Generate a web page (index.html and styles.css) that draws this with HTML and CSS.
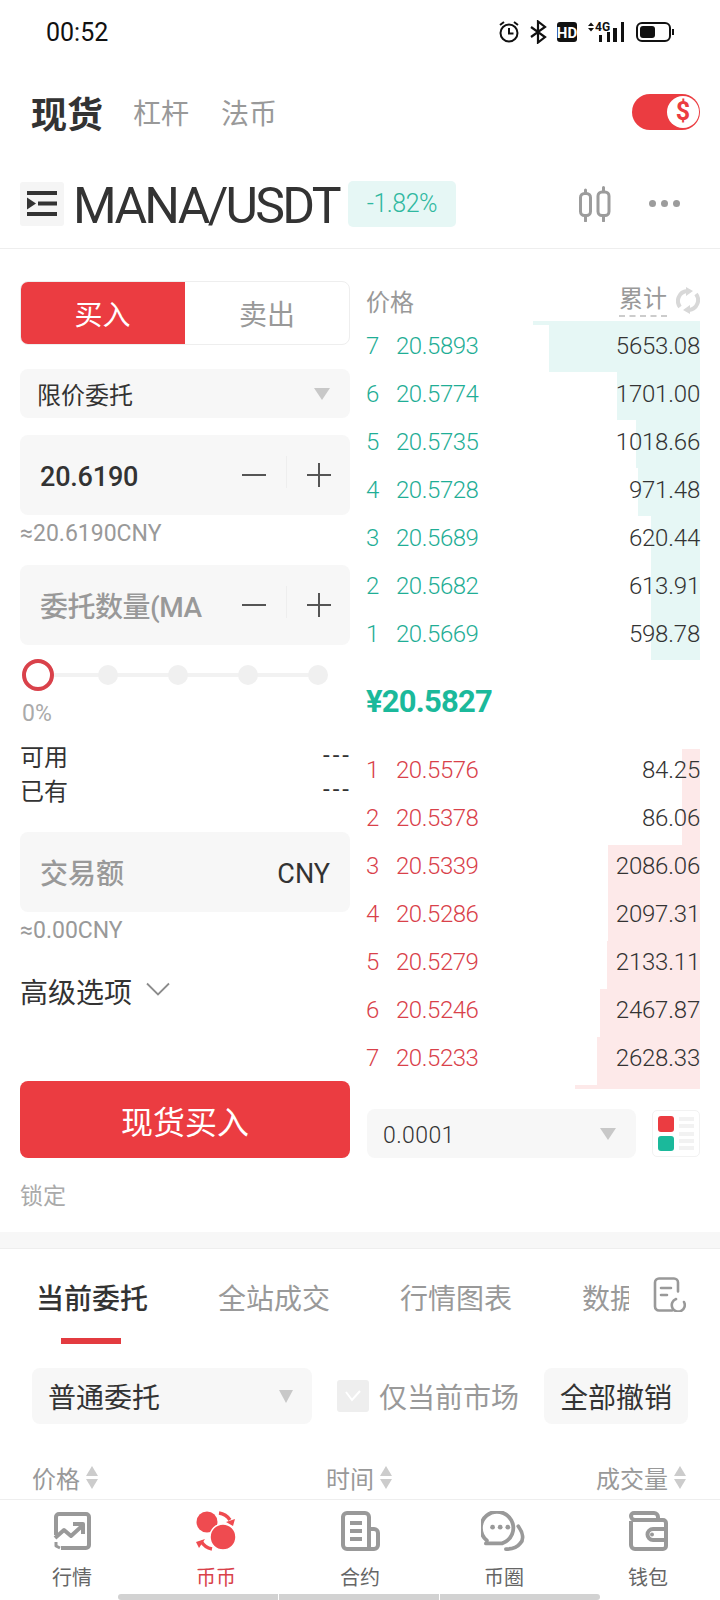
FILE: index.html
```html
<!DOCTYPE html>
<html lang="zh-CN">

<head>
    <meta charset="UTF-8">
    <meta name="viewport" content="width=device-width, initial-scale=1.0">
    <title>现货交易</title>
    <link rel="stylesheet" href="styles.css">
</head>

<body>
    <div class="status-bar">
        <span class="status-time">00:52</span>
        <svg class="status-icons" width="180" height="24" viewBox="0 0 180 24">
            <!-- alarm -->
            <g fill="none" stroke="#111" stroke-width="2">
                <circle cx="11" cy="13" r="8.500" />
                <path d="M11 8v5.500h4.500" />
                <path d="M2 5l4-3M20 5l-4-3" />
            </g>
            <!-- bluetooth -->
            <path d="M33 7l14 10-7 5.500V1.500L47 7 33 17" fill="none" stroke="#111" stroke-width="2.200" />
            <!-- hd -->
            <rect x="59" y="2" width="20" height="20" rx="3" fill="#111" />
            <text x="69" y="17.500" class="status-hd" text-anchor="middle">HD</text>
            <!-- signal -->
            <path d="M90 6l3-3.500L96 6zM90 8l3 3.500L96 8z" fill="#111" />
            <text x="97" y="11" class="status-4g">4G</text>
            <rect x="101" y="15" width="3" height="7" fill="#111" />
            <rect x="109" y="12" width="3" height="10" fill="#111" />
            <rect x="115" y="8" width="4" height="14" fill="#111" />
            <rect x="123" y="2" width="3" height="20" fill="#111" />
            <!-- battery -->
            <rect x="139" y="3" width="33" height="18" rx="5" fill="none" stroke="#111" stroke-width="2" />
            <rect x="142" y="6" width="15" height="12" rx="3" fill="#111" />
            <rect x="174" y="9" width="2" height="6" fill="#111" />
        </svg>
    </div>

    <div class="market-tabs">
        <span class="market-tab active">现货</span>
        <span class="market-tab">杠杆</span>
        <span class="market-tab">法币</span>
        <div class="toggle"><span class="toggle-knob">$</span></div>
    </div>

    <div class="pair-row">
        <div class="pair-menu">
            <svg width="30" height="27" viewBox="0 0 30 27">
                <path d="M0 1h30v4H0zM11 11.500h19v4H11zM0 22h30v4H0z" fill="#333" />
                <path d="M0 7.500l9 6-9 6z" fill="#333" />
            </svg>
        </div>
        <span class="pair-name">MANA/USDT</span>
        <span class="pair-change">-1.82%</span>
        <svg class="pair-candle" width="33" height="36" viewBox="0 0 33 36" fill="none" stroke="#9c9c9c" stroke-width="3" stroke-linecap="round">
            <rect x="1.500" y="7.500" width="10" height="22" rx="4" />
            <path d="M6.500 4v3M6.500 30v5" />
            <rect x="19" y="6" width="11" height="23.500" rx="4" />
            <path d="M24.500 1.500v4M24.500 30v5" />
        </svg>
        <div class="pair-more"><i></i><i></i><i></i></div>
    </div>

    <div class="trade">
        <div class="order-form">
            <div class="side-switch">
                <span class="side side-buy">买入</span>
                <span class="side side-sell">卖出</span>
            </div>

            <div class="select order-type">
                <span>限价委托</span>
                <i class="caret"></i>
            </div>

            <div class="field field-price">
                <span class="field-value">20.6190</span>
                <div class="stepper">
                    <span class="minus"></span>
                    <span class="step-line"></span>
                    <span class="plus"></span>
                </div>
            </div>
            <div class="hint">≈20.6190CNY</div>

            <div class="field field-qty">
                <span class="field-holder">委托数量(MA</span>
                <div class="stepper">
                    <span class="minus"></span>
                    <span class="step-line"></span>
                    <span class="plus"></span>
                </div>
            </div>

            <div class="slider">
                <span class="slider-line"></span>
                <span class="slider-knob"></span>
                <span class="slider-dot"></span>
                <span class="slider-dot"></span>
                <span class="slider-dot"></span>
                <span class="slider-dot"></span>
            </div>
            <div class="percent">0%</div>

            <div class="balance first"><span>可用</span><span class="dashes">---</span></div>
            <div class="balance"><span>已有</span><span class="dashes">---</span></div>

            <div class="field field-amount">
                <span class="field-holder">交易额</span>
                <span class="field-unit">CNY</span>
            </div>
            <div class="hint">≈0.00CNY</div>

            <div class="advanced">
                <span>高级选项</span>
                <svg width="24" height="14" viewBox="0 0 24 14" fill="none" stroke="#8c8c8c" stroke-width="1.800"><path d="M1 1.500l11 11 11-11" /></svg>
            </div>

            <div class="submit">现货买入</div>
            <div class="lock">锁定</div>
        </div>

        <div class="book">
            <div class="book-head">
                <span class="head-price">价格</span>
                <div class="book-total">
                    <span class="total-label">累计</span>
                    <svg width="24" height="27" viewBox="0 0 24 27" fill="none" stroke="#d8d8d8" stroke-width="4">
                        <path d="M4 20A10 10 0 0 1 11 4" />
                        <path d="M20 7A10 10 0 0 1 13 23" />
                        <path d="M10 0l7 4-7 5zM14 27l-7-4 7-5z" fill="#d8d8d8" stroke="none" />
                    </svg>
                </div>
            </div>

            <div class="book-row ask"><i class="bar-top" style="width:167px"></i><i class="bar" style="width:151px"></i><b>7</b><span class="price">20.5893</span><span class="total">5653.08</span></div>
            <div class="book-row ask"><i class="bar" style="width:83px"></i><b>6</b><span class="price">20.5774</span><span class="total">1701.00</span></div>
            <div class="book-row ask"><i class="bar" style="width:64px"></i><b>5</b><span class="price">20.5735</span><span class="total">1018.66</span></div>
            <div class="book-row ask"><i class="bar" style="width:62px"></i><b>4</b><span class="price">20.5728</span><span class="total">971.48</span></div>
            <div class="book-row ask"><i class="bar" style="width:49px"></i><b>3</b><span class="price">20.5689</span><span class="total">620.44</span></div>
            <div class="book-row ask"><i class="bar" style="width:49px"></i><b>2</b><span class="price">20.5682</span><span class="total">613.91</span></div>
            <div class="book-row ask"><i class="bar" style="width:49px"></i><b>1</b><span class="price">20.5669</span><span class="total">598.78</span></div>

            <div class="book-mid">¥20.5827</div>

            <div class="book-row bid"><i class="bar" style="width:18px"></i><b>1</b><span class="price">20.5576</span><span class="total">84.25</span></div>
            <div class="book-row bid"><i class="bar" style="width:18px"></i><b>2</b><span class="price">20.5378</span><span class="total">86.06</span></div>
            <div class="book-row bid"><i class="bar" style="width:92px"></i><b>3</b><span class="price">20.5339</span><span class="total">2086.06</span></div>
            <div class="book-row bid"><i class="bar" style="width:92px"></i><b>4</b><span class="price">20.5286</span><span class="total">2097.31</span></div>
            <div class="book-row bid"><i class="bar" style="width:93px"></i><b>5</b><span class="price">20.5279</span><span class="total">2133.11</span></div>
            <div class="book-row bid"><i class="bar" style="width:100px"></i><b>6</b><span class="price">20.5246</span><span class="total">2467.87</span></div>
            <div class="book-row bid"><i class="bar" style="width:103px"></i><i class="bar-bottom" style="width:125px"></i><b>7</b><span class="price">20.5233</span><span class="total">2628.33</span></div>

            <div class="book-foot">
                <div class="select depth">
                    <span>0.0001</span>
                    <i class="caret"></i>
                </div>
                <div class="layout-btn">
                    <div class="layout-colors"><i class="red"></i><i class="green"></i></div>
                    <div class="layout-lines"><i></i><i></i><i></i><i></i><i></i></div>
                </div>
            </div>
        </div>
    </div>

    <div class="band"></div>

    <div class="orders-tabs">
        <div class="orders-tabs-list">
            <span class="orders-tab active">当前委托</span>
            <span class="orders-tab">全站成交</span>
            <span class="orders-tab">行情图表</span>
            <span class="orders-tab">数据</span>
        </div>
        <svg class="orders-icon" width="33" height="35" viewBox="0 0 33 35" fill="none" stroke="#999" stroke-width="2.600" stroke-linecap="round">
            <path d="M19 33.500H6a4 4 0 0 1-4-4V5.500a4 4 0 0 1 4-4h15a4 4 0 0 1 4 4v9" />
            <path d="M8 11h10M8 18h6" />
            <path d="M23 22a6.500 6.500 0 1 0 8 3" />
        </svg>
    </div>
    <div class="orders-underline"></div>

    <div class="filters">
        <div class="select orders-type">
            <span>普通委托</span>
            <i class="caret"></i>
        </div>
        <div class="check">
            <svg width="20" height="14" viewBox="0 0 20 14" fill="none" stroke="#fff" stroke-width="2"><path d="M3 3l6 8 8-9" /></svg>
        </div>
        <span class="check-label">仅当前市场</span>
        <span class="cancel-all">全部撤销</span>
    </div>

    <div class="orders-head">
        <div class="col"><span>价格</span><span class="sort"><i class="up"></i><i class="down"></i></span></div>
        <div class="col"><span>时间</span><span class="sort"><i class="up"></i><i class="down"></i></span></div>
        <div class="col"><span>成交量</span><span class="sort"><i class="up"></i><i class="down"></i></span></div>
    </div>

    <nav class="nav">
        <div class="nav-items">
            <div class="nav-item">
                <svg width="40" height="40" viewBox="0 0 40 40" fill="none" stroke="#999" stroke-width="4" stroke-linejoin="round">
                    <path d="M4 24V6a3 3 0 0 1 3-3h27a3 3 0 0 1 3 3v28a3 3 0 0 1-3 3H9" />
                    <path d="M3 27l9-8 7 6 11-10" />
                    <path d="M21 13h10v10" />
                    <path d="M4 31v4l4 2" stroke-width="3" />
                </svg>
                <span>行情</span>
            </div>
            <div class="nav-item active">
                <svg width="40" height="40" viewBox="0 0 40 40">
                    <circle cx="11" cy="11" r="10.500" fill="#ef4b50" />
                    <circle cx="27" cy="26" r="13" fill="#ef4b50" stroke="#fff" stroke-width="1.500" />
                    <path d="M23 2a16 16 0 0 1 11 7" fill="none" stroke="#ef4b50" stroke-width="3.500" />
                    <path d="M30 11l9-3-2 7z" fill="#ef4b50" />
                    <path d="M16 38A16 16 0 0 1 5 30" fill="none" stroke="#ef4b50" stroke-width="3.500" />
                    <path d="M9 28l-9 3 3 6z" fill="#ef4b50" />
                </svg>
                <span>币币</span>
            </div>
            <div class="nav-item">
                <svg width="40" height="40" viewBox="0 0 40 40" fill="none" stroke="#999" stroke-width="4" stroke-linejoin="round">
                    <path d="M29 38H7a4 4 0 0 1-4-4V6a4 4 0 0 1 4-4h18a4 4 0 0 1 4 4z" />
                    <path d="M29 18h5a4 4 0 0 1 4 4v12a4 4 0 0 1-4 4h-5" />
                    <path d="M10 12h12M10 20h12M10 28h12" />
                </svg>
                <span>合约</span>
            </div>
            <div class="nav-item">
                <svg width="46" height="42" viewBox="0 0 46 42" fill="none" stroke="#999" stroke-width="4" stroke-linecap="round">
                    <path d="M5 31A17 17 0 1 1 21 34H4" />
                    <path d="M38 16c5 7 6 14 2 18-3 4-8 6-15 6" />
                    <circle cx="11" cy="17" r="2.500" fill="#999" stroke="none" />
                    <circle cx="19" cy="17" r="2.500" fill="#999" stroke="none" />
                    <circle cx="27" cy="17" r="2.500" fill="#999" stroke="none" />
                </svg>
                <span>币圈</span>
            </div>
            <div class="nav-item">
                <svg width="40" height="40" viewBox="0 0 40 40" fill="none" stroke="#999" stroke-width="4" stroke-linejoin="round">
                    <path d="M3 10v24a4 4 0 0 0 4 4h28a3 3 0 0 0 3-3V12a3 3 0 0 0-3-3H7a4 4 0 0 1-4-4 3 3 0 0 1 3-3h20a4 4 0 0 1 4 4v3" />
                    <path d="M38 18H25a5 5 0 0 0 0 11h13" />
                    <circle cx="24" cy="23.500" r="2" fill="#999" stroke="none" />
                </svg>
                <span>钱包</span>
            </div>
        </div>
        <div class="home-bar"><i></i><i></i><i></i></div>
    </nav>
</body>

</html>
```

FILE: styles.css
```css
* {
    box-sizing: border-box;
}

html,
body {
    margin: 0;
    padding: 0;
}

body {
    width: 720px;
    height: 1600px;
    overflow: hidden;
    background-color: #ffffff;
    color: #333333;
    font-family: Roboto, "Noto Sans CJK SC", sans-serif;
}

i {
    display: block;
}

/* status bar */
.status-bar {
    height: 64px;
    display: flex;
    align-items: center;
    justify-content: space-between;
    padding: 0 42px 0 46px;
}

.status-time {
    font-size: 25px;
    color: #111111;
}

.status-hd {
    font-size: 15px;
    font-weight: 700;
    fill: #ffffff;
    font-family: Roboto, sans-serif;
}

.status-4g {
    font-size: 12px;
    font-weight: 700;
    fill: #111111;
    font-family: Roboto, sans-serif;
}

/* spot / margin tabs */
.market-tabs {
    height: 96px;
    display: flex;
    align-items: center;
    padding: 0 20px 0 31px;
}

.market-tab {
    font-size: 28px;
    color: #999999;
    margin-right: 32px;
}

.market-tab.active {
    font-size: 36px;
    font-weight: 700;
    color: #333333;
    margin-right: 30px;
}

.toggle {
    margin-left: auto;
    width: 68px;
    height: 36px;
    border-radius: 18px;
    background-color: #eb3c41;
    display: flex;
    justify-content: flex-end;
    align-items: center;
    padding-right: 1px;
}

.toggle-knob {
    width: 32px;
    height: 32px;
    border-radius: 50%;
    background-color: #ffffff;
    color: #eb3c41;
    font-size: 25px;
    font-weight: 700;
    line-height: 32px;
    text-align: center;
}

/* pair row */
.pair-row {
    height: 89px;
    display: flex;
    align-items: center;
    padding: 0 20px 1px 20px;
    border-bottom: 1px solid #eeeeee;
}

.pair-menu {
    width: 44px;
    height: 44px;
    border-radius: 3px;
    background-color: #f5f5f5;
    display: flex;
    align-items: center;
    justify-content: center;
}

.pair-name {
    margin: 5px 0 0 9px;
    font-size: 50px;
    line-height: 44px;
    letter-spacing: -2.7px;
    color: #333333;
}

.pair-change {
    margin-left: 9px;
    width: 108px;
    height: 46px;
    border-radius: 5px;
    background-color: #e6f7f5;
    color: #2fb8a0;
    font-size: 25px;
    letter-spacing: -0.5px;
    font-weight: 300;
    line-height: 46px;
    text-align: center;
}

.pair-candle {
    margin-left: auto;
}

.pair-more {
    display: flex;
    gap: 5px;
    margin: 0 20px 0 37px;
}

.pair-more i {
    width: 7px;
    height: 7px;
    border-radius: 50%;
    background-color: #9c9c9c;
}

/* trade area */
.trade {
    height: 983px;
    display: flex;
    padding: 32px 20px 0 20px;
    gap: 17px;
}

.order-form {
    width: 330px;
}

.side-switch {
    height: 64px;
    display: flex;
    border: 1px solid #eeeeee;
    border-radius: 8px;
    overflow: hidden;
    font-size: 28px;
}

.side {
    display: flex;
    align-items: center;
    justify-content: center;
}

.side-buy {
    width: 165px;
    margin: -1px 0 -1px -1px;
    background-color: #eb3c41;
    color: #ffffff;
}

.side-sell {
    flex: 1;
    color: #999999;
}

.select {
    display: flex;
    align-items: center;
    justify-content: space-between;
    background-color: #f7f7f7;
    border-radius: 8px;
}

.caret {
    width: 0;
    height: 0;
    border-left: 8px solid transparent;
    border-right: 8px solid transparent;
    border-top: 12px solid #c8c8c8;
}

.order-type {
    height: 49px;
    margin-top: 24px;
    padding: 0 20px 0 17px;
    font-size: 24px;
}

.field {
    height: 80px;
    display: flex;
    align-items: center;
    justify-content: space-between;
    background-color: #f7f7f7;
    border-radius: 8px;
    padding: 0 20px;
}

.field-price {
    margin-top: 17px;
}

.field-qty {
    margin-top: 14px;
}

.field-amount {
    margin-top: 26px;
}

.field-value {
    font-size: 27px;
    font-weight: 500;
    letter-spacing: -0.2px;
    color: #333333;
    padding-top: 4px;
}

.field-holder {
    font-size: 28px;
    font-weight: 500;
    color: #999999;
    white-space: nowrap;
}

.field-qty .field-holder {
    letter-spacing: -0.5px;
}

.field-unit {
    font-size: 27px;
    color: #333333;
    padding-top: 4px;
}

.stepper {
    display: flex;
    align-items: center;
    margin-right: -1px;
}

.minus,
.plus {
    position: relative;
    display: block;
    width: 24px;
    height: 24px;
}

.minus::before,
.plus::before,
.plus::after {
    content: "";
    position: absolute;
    background-color: #555555;
}

.minus::before,
.plus::before {
    left: 0;
    right: 0;
    top: 11px;
    height: 2px;
}

.plus::after {
    top: 0;
    bottom: 0;
    left: 11px;
    width: 2px;
}

.step-line {
    width: 1px;
    height: 32px;
    background-color: #eeeeee;
    margin: -6px 20px 0 20px;
}

.hint {
    height: 36px;
    line-height: 36px;
    padding-top: 1px;
    font-size: 23px;
    color: #999999;
}

.slider {
    position: relative;
    display: flex;
    align-items: center;
    gap: 50px;
    width: 306px;
    height: 32px;
    margin: 14px 0 0 2px;
}

.slider-line {
    position: absolute;
    left: 10px;
    right: 10px;
    top: 14px;
    height: 4px;
    background-color: #f2f2f2;
}

.slider-knob {
    position: relative;
    width: 32px;
    height: 32px;
    border: 4px solid #d9414a;
    border-radius: 50%;
    background-color: #ffffff;
    margin-right: -6px;
}

.slider-dot {
    position: relative;
    width: 20px;
    height: 20px;
    border-radius: 50%;
    background-color: #f0f0f0;
}

.percent {
    height: 36px;
    line-height: 36px;
    margin: 5px 0 0 2px;
    font-size: 23px;
    color: #aaaaaa;
}

.balance {
    height: 34px;
    display: flex;
    align-items: center;
    justify-content: space-between;
    font-size: 24px;
}

.balance.first {
    margin-top: 6px;
}

.dashes {
    font-size: 24px;
    letter-spacing: 3px;
    margin-right: -2px;
}

.advanced {
    height: 36px;
    margin-top: 25px;
    display: flex;
    align-items: center;
    gap: 14px;
    font-size: 28px;
}

.advanced svg {
    margin-top: -4px;
}

.submit {
    height: 77px;
    margin-top: 72px;
    border-radius: 8px;
    background-color: #eb3c41;
    color: #ffffff;
    font-size: 32px;
    display: flex;
    align-items: center;
    justify-content: center;
}

.lock {
    height: 36px;
    line-height: 36px;
    margin-top: 21px;
    font-size: 23px;
    color: #aaaaaa;
}

/* order book */
.book {
    width: 333px;
}

.book-head {
    height: 41px;
    display: flex;
    justify-content: space-between;
    font-size: 24px;
    color: #999999;
}

.head-price {
    margin: 2px 0 0 -1px;
}

.book-total {
    display: flex;
    align-items: flex-start;
    gap: 9px;
    margin-top: 5px;
}

.total-label {
    height: 32px;
    line-height: 28px;
    margin-top: -1px;
    border-bottom: 2px dashed #cccccc;
}

.book-total svg {
    margin-top: 1px;
}

.book-row {
    position: relative;
    height: 48px;
    display: flex;
    align-items: center;
    font-size: 24px;
    font-weight: 300;
    letter-spacing: -0.2px;
}

.book-row b {
    position: relative;
    width: 30px;
    margin-left: -1px;
    font-weight: 300;
}

.price {
    position: relative;
    letter-spacing: -0.45px;
}

.total {
    position: relative;
    margin-left: auto;
    color: #333333;
}

.bar,
.bar-top,
.bar-bottom {
    position: absolute;
    right: 0;
}

.ask {
    color: #1fae96;
}

.ask .bar {
    top: 2px;
    height: 48px;
    background-color: #e6f7f5;
}

.bar-top {
    top: -1px;
    height: 4px;
    background-color: #e6f7f5;
}

.bid {
    color: #d9414a;
}

.bid .bar {
    top: 3px;
    height: 48px;
    background-color: #fde9e9;
}

.bar-bottom {
    top: 51px;
    height: 4px;
    background-color: #fde9e9;
}

.book-mid {
    height: 88px;
    padding-bottom: 2px;
    margin-left: -1px;
    display: flex;
    align-items: center;
    font-size: 31px;
    font-weight: 700;
    letter-spacing: -0.8px;
    color: #1bb99b;
}

.book-foot {
    display: flex;
    justify-content: space-between;
    margin-top: 27px;
}

.depth {
    width: 269px;
    height: 49px;
    padding: 0 20px 0 16px;
    font-size: 23px;
    letter-spacing: 0.4px;
    font-weight: 300;
}

.depth span {
    padding-top: 4px;
}

.layout-btn {
    width: 48px;
    height: 47px;
    margin-top: 1px;
    display: flex;
    gap: 5px;
    padding: 5px;
    border: 1px solid #f2f2f2;
    border-radius: 5px;
}

.layout-colors {
    display: flex;
    flex-direction: column;
    gap: 4px;
}

.layout-colors i {
    width: 16px;
    height: 16px;
    border-radius: 3px;
}

.layout-colors .red {
    background-color: #eb3c41;
}

.layout-colors .green {
    background-color: #1bb99b;
}

.layout-lines {
    flex: 1;
    display: flex;
    flex-direction: column;
    justify-content: space-between;
    padding: 1px 0;
}

.layout-lines i {
    height: 4px;
    background-color: #f2f2f2;
}

/* current orders */
.band {
    height: 17px;
    background-color: #f7f7f7;
    border-bottom: 1px solid #eeeeee;
}

.orders-tabs {
    height: 89px;
    display: flex;
    align-items: center;
    padding: 6px 0 0 36px;
}

.orders-tabs-list {
    width: 593px;
    overflow: hidden;
    display: flex;
    gap: 70px;
    white-space: nowrap;
    font-size: 28px;
    color: #999999;
}

.orders-tab.active {
    font-weight: 500;
    color: #333333;
}

.orders-icon {
    margin: -4px 0 0 24px;
}

.orders-underline {
    width: 60px;
    height: 6px;
    margin-left: 61px;
    background-color: #e33b40;
}

.filters {
    height: 56px;
    margin-top: 24px;
    display: flex;
    align-items: center;
    padding: 0 32px;
    font-size: 28px;
}

.orders-type {
    width: 280px;
    height: 56px;
    padding: 0 19px 0 16px;
}

.orders-type .caret {
    border-left-width: 7px;
    border-right-width: 7px;
    border-top-width: 13px;
}

.check {
    width: 32px;
    height: 32px;
    margin-left: 25px;
    border-radius: 3px;
    background-color: #eeeeee;
    display: flex;
    align-items: center;
    justify-content: center;
}

.check-label {
    margin-left: 10px;
    color: #999999;
}

.cancel-all {
    width: 144px;
    height: 56px;
    margin-left: auto;
    border-radius: 8px;
    background-color: #f7f7f7;
    display: flex;
    align-items: center;
    justify-content: center;
}

.orders-head {
    height: 37px;
    margin-top: 36px;
    padding: 0 34px 2px 32px;
    display: grid;
    grid-template-columns: 294px 1fr auto;
    font-size: 24px;
    color: #999999;
}

.col {
    display: flex;
    align-items: center;
    gap: 6px;
}

.sort {
    display: flex;
    flex-direction: column;
    gap: 3px;
}

.sort .up {
    width: 0;
    height: 0;
    border-left: 6px solid transparent;
    border-right: 6px solid transparent;
    border-bottom: 10px solid #cccccc;
}

.sort .down {
    width: 0;
    height: 0;
    border-left: 6px solid transparent;
    border-right: 6px solid transparent;
    border-top: 10px solid #cccccc;
}

/* bottom nav */
.nav {
    height: 101px;
    margin-top: 2px;
    border-top: 1px solid #eeeeee;
}

.nav-items {
    height: 94px;
    display: flex;
    padding-top: 11px;
}

.nav-item {
    width: 144px;
    display: flex;
    flex-direction: column;
    align-items: center;
    font-size: 20px;
    color: #666666;
}

.nav-item svg {
    height: 40px;
}

.nav-item span {
    margin-top: 12px;
    line-height: 30px;
}

.nav-item.active {
    color: #d9414a;
}

.home-bar {
    width: 482px;
    height: 6px;
    margin-left: 118px;
    display: flex;
    gap: 1px;
}

.home-bar i {
    flex: 1;
    background-color: #d2d2d2;
}

.home-bar i:first-child {
    border-radius: 3px 0 0 3px;
}

.home-bar i:last-child {
    border-radius: 0 3px 3px 0;
}
```
